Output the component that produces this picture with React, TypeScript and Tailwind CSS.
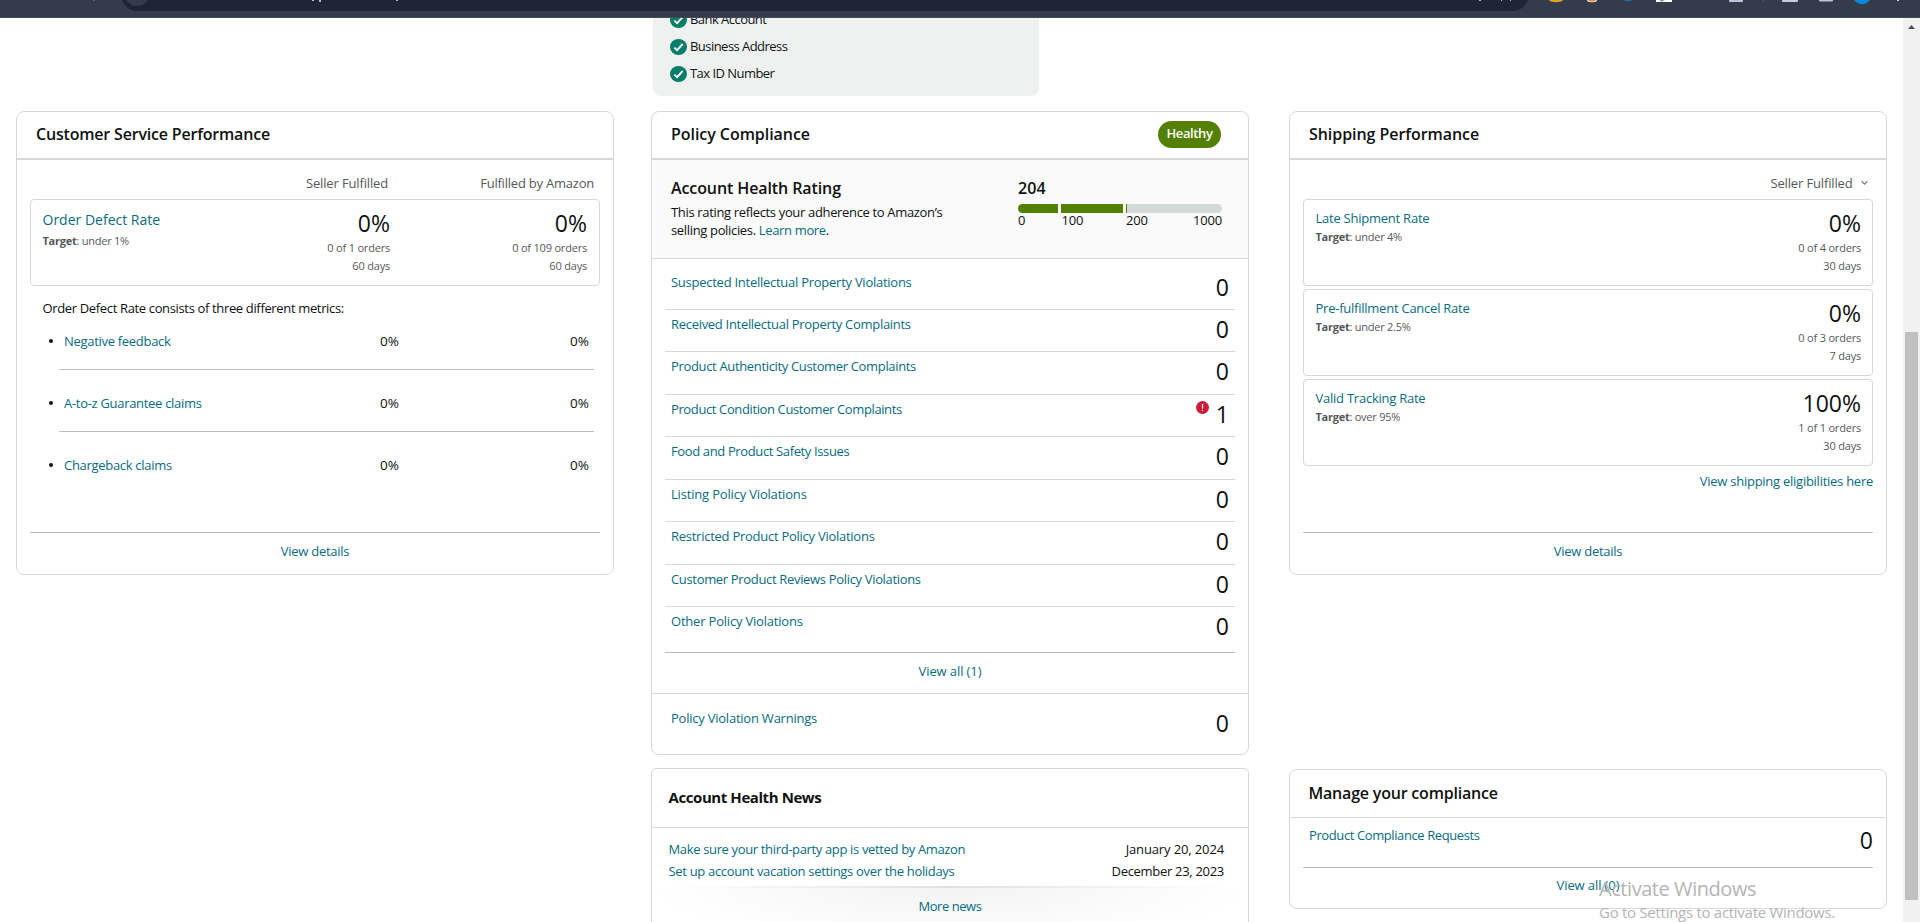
import type { ReactNode } from "react";

const link = "text-[#086c7f]";

function Card({ className, children }: { className: string; children: ReactNode }) {
  return (
    <section className={`flex w-[598px] shrink-0 flex-col overflow-hidden border border-[#d5d9d9] bg-white ${className}`}>
      {children}
    </section>
  );
}

function CardHeader({ title, tracking, children }: { title: string; tracking: string; children?: ReactNode }) {
  return (
    <header className="flex h-12 shrink-0 items-start justify-between border-b-2 border-[#d5d9d9] pl-[19px] pr-[27px]">
      <h2 className={`mt-2.5 text-base leading-6 font-semibold ${tracking}`}>{title}</h2>
      {children}
    </header>
  );
}

function Divider({ className }: { className: string }) {
  return <div className={`h-px shrink-0 bg-[#bbbfbf] ${className}`} />;
}

function FooterLink({ children, className }: { children: ReactNode; className: string }) {
  return <a className={`text-center leading-5 ${link} ${className}`}>{children}</a>;
}

function Stat({ value, orders, days, className }: { value: string; orders: string; days: string; className: string }) {
  return (
    <div className={`pt-[9px] text-right text-[11px] leading-[18px] tracking-[-0.2px] text-[#565959] ${className}`}>
      <p className="mb-0.5 text-[23px] leading-7 tracking-normal text-[#0f1111]">{value}</p>
      <p>{orders}</p>
      <p>{days}</p>
    </div>
  );
}

function Target({ children }: { children: ReactNode }) {
  return (
    <p className="text-[11px] leading-[18px] tracking-[-0.25px] text-[#565959]">
      <b className="font-bold">Target</b>: {children}
    </p>
  );
}

function CheckIcon() {
  return (
    <svg className="h-4 w-[17px] shrink-0" viewBox="0 0 17 16">
      <ellipse cx="8.5" cy="8" rx="8.5" ry="8" fill="#067d68" />
      <path d="M4.3 8.6l2.8 2.6 5.6-6.2" fill="none" stroke="#fff" strokeWidth="1.9" />
    </svg>
  );
}

function AlertIcon() {
  return (
    <svg className="mt-0.5 mr-[7px] h-[13px] w-[13px] shrink-0" viewBox="0 0 13 13">
      <circle cx="6.5" cy="6.5" r="6.5" fill="#cc1c39" />
      <path d="M6.5 3v4.6M6.5 8.7v1.3" stroke="#fff" strokeWidth="1.2" />
    </svg>
  );
}

function BrowserBar() {
  return (
    <svg className="block h-[18px] w-[1920px] shrink-0" viewBox="0 0 1920 18">
      <rect width="1920" height="18" fill="#343c4c" />
      <rect x="121" y="-22" width="1408" height="33" rx="16.5" fill="#1e2636" />
      <circle cx="137" cy="-6" r="12" fill="#343c4c" />
      <rect x="93" width="2" height="1" fill="#5a6170" />
      <rect x="312" width="2" height="1" fill="#b5c4d8" />
      <rect x="319" width="2" height="2" fill="#b5bcc8" />
      <rect x="396" width="2" height="1" fill="#9fb4d0" />
      <rect x="1479" width="2" height="1" fill="#b9bfcb" />
      <rect x="1501" width="1" height="1" fill="#b9bfcb" />
      <rect x="1510" width="1" height="1" fill="#b9bfcb" />
      <ellipse cx="1556" cy="0" rx="7" ry="2.2" fill="#e0a11b" />
      <ellipse cx="1592" cy="0" rx="5" ry="2.2" fill="#fff" />
      <ellipse cx="1592" cy="-.4" rx="4" ry="2" fill="#ee8140" />
      <ellipse cx="1628" cy="0" rx="4" ry="1.3" fill="#1d6ea5" />
      <rect x="1656" width="16" height="2" fill="#fff" />
      <path d="M1660 0h5l-4 2z" fill="#8a8f98" />
      <rect x="1729" y="-2" width="14" height="4" rx="1" fill="#bcc5dc" />
      <rect x="1763" width="1" height="2" fill="#535b6b" />
      <rect x="1782" y="-2" width="16" height="4" rx="1" fill="#c1cbe6" />
      <rect x="1819" y="-2" width="14" height="3.5" rx="1" fill="#bcc5dc" />
      <circle cx="1862" cy="-5" r="9.2" fill="#0a87d8" />
      <rect x="1897" width="2" height="1" fill="#c8cfdc" />
      <rect y="17" width="1920" height="1" fill="#454b59" />
    </svg>
  );
}

const defectMetrics = ["Negative feedback", "A-to-z Guarantee claims", "Chargeback claims"];

function CustomerService() {
  return (
    <Card className="mt-[93px] h-[464px] rounded-lg">
      <CardHeader title="Customer Service Performance" tracking="tracking-[-0.19px]" />
      <div className="mt-[13px] flex h-5 justify-end pr-[19px] text-right leading-5 text-[#565959]">
        <span className="tracking-[-0.15px]">Seller Fulfilled</span>
        <span className="w-[206px] tracking-[-0.22px]">Fulfilled by Amazon</span>
      </div>
      <div className="mx-[13px] mt-1.5 flex h-[87px] shrink-0 rounded border border-[#d5d9d9] pr-3 pl-[11.5px]">
        <div className="flex-1 pt-2.5">
          <a className={`mb-0.5 block text-sm leading-5 tracking-normal ${link}`}>Order Defect Rate</a>
          <Target>under 1%</Target>
        </div>
        <Stat value="0%" orders="0 of 1 orders" days="60 days" className="w-[120px]" />
        <Stat value="0%" orders="0 of 109 orders" days="60 days" className="w-[197px]" />
      </div>
      <p className="mt-3 ml-[25.5px] leading-5 tracking-[-0.35px]">Order Defect Rate consists of three different metrics:</p>
      <ul className="mt-[13px]">
        {defectMetrics.map((name, i) => (
          <li key={name}>
            {i > 0 && <Divider className="mt-[18px] mr-[19px] mb-[23px] ml-[42px]" />}
            <div className="flex h-5 items-center pr-6 pl-8 leading-5 tracking-normal">
              <span className="mr-[11px] h-1 w-1 rounded-full bg-[#0f1111]" />
              <a className={`flex-1 tracking-[-0.3px] ${link}`}>{name}</a>
              <span className="text-[13.5px]">0%</span>
              <span className="w-[190px] text-right text-[13.5px]">0%</span>
            </div>
          </li>
        ))}
      </ul>
      <Divider className="mx-[13px] mt-[57px]" />
      <FooterLink className="mt-2">View details</FooterLink>
    </Card>
  );
}

const policies: { name: string; count: number; tracking: string }[] = [
  { name: "Suspected Intellectual Property Violations", count: 0, tracking: "tracking-[-0.26px]" },
  { name: "Received Intellectual Property Complaints", count: 0, tracking: "tracking-[-0.3px]" },
  { name: "Product Authenticity Customer Complaints", count: 0, tracking: "tracking-[-0.34px]" },
  { name: "Product Condition Customer Complaints", count: 1, tracking: "tracking-[-0.38px]" },
  { name: "Food and Product Safety Issues", count: 0, tracking: "tracking-[-0.37px]" },
  { name: "Listing Policy Violations", count: 0, tracking: "tracking-[-0.18px]" },
  { name: "Restricted Product Policy Violations", count: 0, tracking: "tracking-[-0.26px]" },
  { name: "Customer Product Reviews Policy Violations", count: 0, tracking: "tracking-[-0.33px]" },
  { name: "Other Policy Violations", count: 0, tracking: "tracking-[-0.2px]" },
];

function CountRow({ name, count, tracking, className }: { name: string; count: number; tracking: string; className: string }) {
  return (
    <div className={`flex shrink-0 items-start pl-1.5 ${className}`}>
      <a className={`flex-1 leading-5 ${tracking} ${link}`}>{name}</a>
      {count > 0 && <AlertIcon />}
      <span className="mt-px text-[23px] leading-7 tracking-normal">{count}</span>
    </div>
  );
}

function rowBox(i: number) {
  if (i === 0) return "h-[51px] border-b border-[#d5d9d9] pt-[13px] pr-1.5";
  if (i === policies.length - 1) return "h-[46px] border-b border-[#bbbfbf] pt-1 pr-1.5";
  return "h-[42.43px] border-b border-[#d5d9d9] pt-1 pr-1.5";
}

function PolicyCompliance() {
  return (
    <Card className="mt-[15px] h-[644px] rounded-lg">
      <CardHeader title="Policy Compliance" tracking="tracking-[-0.05px]">
        <span className="mt-[9px] h-[27px] w-[63px] rounded-full bg-[#538000] text-center leading-[25px] font-semibold tracking-[-0.4px] text-white">
          Healthy
        </span>
      </CardHeader>
      <div className="flex h-[99px] shrink-0 justify-between border-b border-[#d5d9d9] bg-[#fafafa] pt-4 pr-[26px] pl-[19px]">
        <div className="w-[290px]">
          <h3 className="text-base leading-6 font-semibold tracking-[-0.1px]">Account Health Rating</h3>
          <p className="mt-[3px] leading-[18px] tracking-[-0.34px]">
            This rating reflects your adherence to Amazon’s
            <br />
            selling policies. <a className={link}>Learn more</a>.
          </p>
        </div>
        <div className="w-[204px]">
          <p className="text-base leading-6 font-semibold tracking-[0.1px]">204</p>
          <div className="mt-1 flex h-[9px] gap-[3px] overflow-hidden rounded-full bg-[#fafafa]">
            <span className="w-10 bg-[#538000]" />
            <span className="w-[62px] bg-[#538000]" />
            <span className="flex-1 border-l border-[#538000] bg-[#d5d9d9]" />
          </div>
          <div className="flex leading-[14px] tracking-[-0.2px]">
            <span className="w-[43.5px]">0</span>
            <span className="w-[64.5px]">100</span>
            <span className="flex-1">200</span>
            <span>1000</span>
          </div>
        </div>
      </div>
      <div className="mx-[13px] flex shrink-0 flex-col">
        {policies.map((p, i) => (
          <CountRow key={p.name} name={p.name} count={p.count} tracking={p.tracking} className={rowBox(i)} />
        ))}
      </div>
      <FooterLink className="mt-2 mb-3 tracking-[-0.1px]">View all (1)</FooterLink>
      <CountRow
        name="Policy Violation Warnings"
        count={0}
        tracking="tracking-[-0.23px]"
        className="border-t border-[#d5d9d9] pt-3.5 pr-[19px] pl-[19px]"
      />
    </Card>
  );
}

function News() {
  return (
    <Card className="mt-[13px] h-[200px] rounded-[5px]">
      <h2 className="h-[59px] shrink-0 border-b border-[#d5d9d9] pt-[18px] pl-[16.5px] text-[15px] leading-5 font-bold tracking-[-0.42px]">
        Account Health News
      </h2>
      <div className="mt-2.5 pr-6 pl-[16.5px] leading-[22px]">
        <div className="flex justify-between">
          <a className={`tracking-[-0.35px] ${link}`}>Make sure your third-party app is vetted by Amazon</a>
          <span className="tracking-[-0.13px]">January 20, 2024</span>
        </div>
        <div className="flex justify-between">
          <a className={`tracking-[-0.32px] ${link}`}>Set up account vacation settings over the holidays</a>
          <span className="tracking-[-0.3px]">December 23, 2023</span>
        </div>
      </div>
      <div className="mt-1 h-0.5 shrink-0 bg-[linear-gradient(90deg,transparent_3%,#dfe1e1_50%,transparent_97%)]" />
      <div className="flex h-20 shrink-0 justify-center bg-[radial-gradient(ellipse_50%_70%_at_50%_0%,#f3f3f3,#ffffff)] pt-2">
        <a className={`leading-5 tracking-[-0.45px] ${link}`}>More news</a>
      </div>
    </Card>
  );
}

const shipping = [
  { name: "Late Shipment Rate", target: "under 4%", value: "0%", orders: "0 of 4 orders", days: "30 days" },
  { name: "Pre-fulfillment Cancel Rate", target: "under 2.5%", value: "0%", orders: "0 of 3 orders", days: "7 days" },
  { name: "Valid Tracking Rate", target: "over 95%", value: "100%", orders: "1 of 1 orders", days: "30 days" },
];

function Shipping() {
  return (
    <Card className="mt-[93px] h-[464px] rounded-lg">
      <CardHeader title="Shipping Performance" tracking="tracking-[-0.06px]" />
      <div className="mt-[13px] flex h-5 items-center justify-end pr-[18px] leading-5 tracking-[-0.15px] text-[#565959]">
        Seller Fulfilled
        <svg className="ml-[8.5px] h-[6px] w-[7px]" viewBox="0 0 7 6">
          <path d="M.7 1.2l2.8 3 2.8-3" fill="none" stroke="#6f7373" strokeWidth="1.1" />
        </svg>
      </div>
      <div className="mx-[13px] mt-1.5 flex flex-col gap-[3px]">
        {shipping.map((s) => (
          <div key={s.name} className="flex h-[87px] justify-between rounded border border-[#d5d9d9] pr-[11px] pl-[11.5px]">
            <div className="pt-2">
              <a className={`block leading-5 tracking-[-0.24px] ${link}`}>{s.name}</a>
              <Target>{s.target}</Target>
            </div>
            <Stat value={s.value} orders={s.orders} days={s.days} className="w-[120px]" />
          </div>
        ))}
      </div>
      <a className={`mt-[5px] mr-[13px] self-end leading-5 tracking-[-0.26px] ${link}`}>View shipping eligibilities here</a>
      <Divider className="mx-[13px] mt-[41px]" />
      <FooterLink className="mt-2">View details</FooterLink>
    </Card>
  );
}

function ManageCompliance() {
  return (
    <Card className="mt-[194px] h-[140px] rounded-lg">
      <h2 className="h-12 shrink-0 border-b border-[#d5d9d9] pt-[11px] pl-[18.5px] text-base leading-6 font-semibold tracking-[-0.2px]">
        Manage your compliance
      </h2>
      <CountRow
        name="Product Compliance Requests"
        count={0}
        tracking="tracking-[-0.4px]"
        className="mx-[13px] h-[50px] border-b border-[#bbbfbf] pt-[7px]"
      />
      <FooterLink className="mt-[7px] tracking-[-0.1px]">View all (0)</FooterLink>
    </Card>
  );
}

function Verification() {
  return (
    <div className="ml-0.5 flex h-[78px] w-[386px] shrink-0 flex-col justify-end overflow-hidden rounded-b-lg bg-[#eff1f1] pb-[9px] pl-[17px] tracking-[-0.54px]">
      {["Bank Account", "Business Address", "Tax ID Number"].map((t) => (
        <div key={t} className="flex h-[27px] shrink-0 items-center gap-[3px] leading-[27px]">
          <CheckIcon />
          {t}
        </div>
      ))}
    </div>
  );
}

function Scrollbar() {
  return (
    <div className="flex w-[17px] shrink-0 flex-col items-center bg-[#f1f1f1]">
      <svg className="mt-[7px] h-1 w-[7px]" viewBox="0 0 7 4">
        <path d="M0 4L3.5 0 7 4z" fill="#505050" />
      </svg>
      <div className="mt-[303px] h-[568px] w-[13px] bg-[#c1c1c1]" />
    </div>
  );
}

export default function App() {
  return (
    <div className="relative flex h-[922px] w-[1920px] flex-col overflow-hidden bg-white font-['Open_Sans','Noto_Sans',sans-serif] text-[13px] tracking-[-0.28px] text-[#0f1111]">
      <BrowserBar />
      <div className="flex h-[904px]">
        <main className="flex h-full w-[1903px] overflow-hidden pl-4">
          <div>
            <CustomerService />
          </div>
          <div className="ml-[37px] flex flex-col">
            <Verification />
            <PolicyCompliance />
            <News />
          </div>
          <div className="ml-10">
            <Shipping />
            <ManageCompliance />
          </div>
        </main>
        <Scrollbar />
      </div>
      <div className="pointer-events-none absolute top-[875px] left-[1599px] whitespace-nowrap text-[#b4b4b4]">
        <p className="text-xl leading-7 tracking-[-0.44px]">Activate Windows</p>
        <p className="-mt-px text-[15px] leading-5 tracking-[-0.28px]">Go to Settings to activate Windows.</p>
      </div>
    </div>
  );
}
